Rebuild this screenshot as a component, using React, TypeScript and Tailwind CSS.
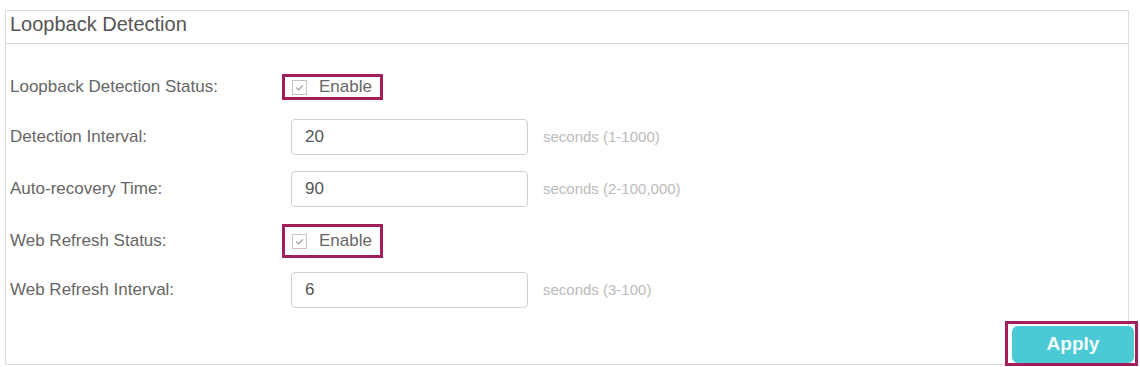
import React from "react"

const FONT = { fontFamily: '"Liberation Sans", Arial, sans-serif' }

function Check() {
  return (
    <span className="flex h-[15px] w-[15px] items-center justify-center border border-[#c4c4c4] bg-white">
      <svg viewBox="0 0 12 12" className="h-[11px] w-[11px]" fill="none" stroke="#8a8a8a" strokeWidth="1.1">
        <path d="M2.5 6.2 L5 8.6 L9.6 3.6" />
      </svg>
    </span>
  )
}

function EnableBox({ h }: { h: string }) {
  return (
    <div className={`flex w-[101px] items-center gap-[12px] border-[3px] border-[#a21f5c] pl-[7px] ${h}`}>
      <Check />
      <span className="text-[17px] text-[#666]">Enable</span>
    </div>
  )
}

function Field({ value, hint }: { value: string; hint: string }) {
  return (
    <div className="flex items-center">
      <div className="ml-[9px] flex h-[36px] w-[237px] items-center rounded-[4px] border border-[#cfcfcf] pl-[13px] text-[17px] text-[#555]">
        {value}
      </div>
      <span className="ml-[15px] text-[15px] text-[#bbb]">{hint}</span>
    </div>
  )
}

const ROWS = [
  { label: "Loopback Detection Status:", h: "h-[50px]", kind: "check", boxH: "h-[26px]" },
  { label: "Detection Interval:", h: "h-[50px]", kind: "field", value: "20", hint: "seconds (1-1000)" },
  { label: "Auto-recovery Time:", h: "h-[54px]", kind: "field", value: "90", hint: "seconds (2-100,000)" },
  { label: "Web Refresh Status:", h: "h-[50px]", kind: "check", boxH: "h-[34px]" },
  { label: "Web Refresh Interval:", h: "h-[48px]", kind: "field", value: "6", hint: "seconds (3-100)" },
]

export default function App() {
  return (
    <div className="h-[367px] w-[1140px] bg-white pl-[5px] pt-[10px]" style={FONT}>
      <div className="flex h-[355px] w-[1124px] flex-col border border-[#dcdcdc]">
        {/* Header */}
        <div className="h-[33px] border-b border-[#d6d6d6] pl-[4px] pt-[1px] text-[20px] leading-[24px] text-[#555]">
          Loopback Detection
        </div>

        {/* Rows */}
        <div className="flex flex-col pt-[18px]">
          {ROWS.map((r) => (
            <div key={r.label} className={`flex items-center ${r.h}`}>
              <span className="w-[276px] pl-[4px] text-[17px] text-[#666]">{r.label}</span>
              {r.kind === "check" ? (
                <EnableBox h={r.boxH!} />
              ) : (
                <Field value={r.value!} hint={r.hint!} />
              )}
            </div>
          ))}
        </div>

        {/* Footer */}
        <div className="flex flex-1 items-end justify-end">
          <div className="mr-[-10px] mb-[-2px] flex h-[45px] w-[133px] border-[3px] border-[#a21f5c] pl-[4px] pt-[2px] pr-[1px]">
            <button className="flex-1 rounded-[6px] bg-[#4bc9d5] text-[19px] font-bold text-[#f4fdff]">
              Apply
            </button>
          </div>
        </div>
      </div>
    </div>
  )
}
